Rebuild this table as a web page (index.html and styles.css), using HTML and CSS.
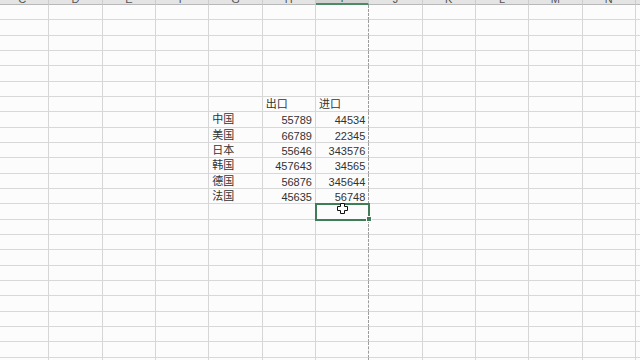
FILE: index.html
```html
<!DOCTYPE html>
<html lang="zh-CN">
<head>
<meta charset="utf-8">
<title>Sheet</title>
<link rel="stylesheet" href="styles.css">
</head>
<body>
<div class="sheet">
  <div class="hdr">
    <div class="h"><span>C</span></div><div class="h"><span>D</span></div><div class="h"><span>E</span></div><div class="h"><span>F</span></div><div class="h"><span>G</span></div><div class="h"><span>H</span></div><div class="h active"><span>I</span></div><div class="h"><span>J</span></div><div class="h"><span>K</span></div><div class="h"><span>L</span></div><div class="h"><span>M</span></div><div class="h"><span>N</span></div><div class="h"><span>O</span></div>
  </div>
  <div class="row"><div class="c"></div><div class="c"></div><div class="c"></div><div class="c"></div><div class="c"></div><div class="c"></div><div class="c"></div><div class="c"></div><div class="c"></div><div class="c"></div><div class="c"></div><div class="c"></div><div class="c"></div></div>
  <div class="row"><div class="c"></div><div class="c"></div><div class="c"></div><div class="c"></div><div class="c"></div><div class="c"></div><div class="c"></div><div class="c"></div><div class="c"></div><div class="c"></div><div class="c"></div><div class="c"></div><div class="c"></div></div>
  <div class="row"><div class="c"></div><div class="c"></div><div class="c"></div><div class="c"></div><div class="c"></div><div class="c"></div><div class="c"></div><div class="c"></div><div class="c"></div><div class="c"></div><div class="c"></div><div class="c"></div><div class="c"></div></div>
  <div class="row"><div class="c"></div><div class="c"></div><div class="c"></div><div class="c"></div><div class="c"></div><div class="c"></div><div class="c"></div><div class="c"></div><div class="c"></div><div class="c"></div><div class="c"></div><div class="c"></div><div class="c"></div></div>
  <div class="row"><div class="c"></div><div class="c"></div><div class="c"></div><div class="c"></div><div class="c"></div><div class="c"></div><div class="c"></div><div class="c"></div><div class="c"></div><div class="c"></div><div class="c"></div><div class="c"></div><div class="c"></div></div>
  <div class="row"><div class="c"></div><div class="c"></div><div class="c"></div><div class="c"></div><div class="c"></div><div class="c"></div><div class="c"></div><div class="c"></div><div class="c"></div><div class="c"></div><div class="c"></div><div class="c"></div><div class="c"></div></div>
  <div class="row"><div class="c"></div><div class="c"></div><div class="c"></div><div class="c"></div><div class="c"></div><div class="c t">出口</div><div class="c t">进口</div><div class="c"></div><div class="c"></div><div class="c"></div><div class="c"></div><div class="c"></div><div class="c"></div></div>
  <div class="row"><div class="c"></div><div class="c"></div><div class="c"></div><div class="c"></div><div class="c t">中国</div><div class="c n">55789</div><div class="c n">44534</div><div class="c"></div><div class="c"></div><div class="c"></div><div class="c"></div><div class="c"></div><div class="c"></div></div>
  <div class="row"><div class="c"></div><div class="c"></div><div class="c"></div><div class="c"></div><div class="c t">美国</div><div class="c n">66789</div><div class="c n">22345</div><div class="c"></div><div class="c"></div><div class="c"></div><div class="c"></div><div class="c"></div><div class="c"></div></div>
  <div class="row"><div class="c"></div><div class="c"></div><div class="c"></div><div class="c"></div><div class="c t">日本</div><div class="c n">55646</div><div class="c n">343576</div><div class="c"></div><div class="c"></div><div class="c"></div><div class="c"></div><div class="c"></div><div class="c"></div></div>
  <div class="row"><div class="c"></div><div class="c"></div><div class="c"></div><div class="c"></div><div class="c t">韩国</div><div class="c n">457643</div><div class="c n">34565</div><div class="c"></div><div class="c"></div><div class="c"></div><div class="c"></div><div class="c"></div><div class="c"></div></div>
  <div class="row"><div class="c"></div><div class="c"></div><div class="c"></div><div class="c"></div><div class="c t">德国</div><div class="c n">56876</div><div class="c n">345644</div><div class="c"></div><div class="c"></div><div class="c"></div><div class="c"></div><div class="c"></div><div class="c"></div></div>
  <div class="row"><div class="c"></div><div class="c"></div><div class="c"></div><div class="c"></div><div class="c t">法国</div><div class="c n">45635</div><div class="c n">56748</div><div class="c"></div><div class="c"></div><div class="c"></div><div class="c"></div><div class="c"></div><div class="c"></div></div>
  <div class="row"><div class="c"></div><div class="c"></div><div class="c"></div><div class="c"></div><div class="c"></div><div class="c"></div><div class="c sel"><svg class="cursor" width="11" height="11" viewBox="0 0 11 11"><polygon points="3.5,0.5 7.5,0.5 7.5,3.5 10.5,3.5 10.5,7.5 7.5,7.5 7.5,10.5 3.5,10.5 3.5,7.5 0.5,7.5 0.5,3.5 3.5,3.5" fill="#fff" stroke="#111" stroke-width="1"/></svg></div><div class="c"></div><div class="c"></div><div class="c"></div><div class="c"></div><div class="c"></div><div class="c"></div></div>
  <div class="row"><div class="c"></div><div class="c"></div><div class="c"></div><div class="c"></div><div class="c"></div><div class="c"></div><div class="c"></div><div class="c"></div><div class="c"></div><div class="c"></div><div class="c"></div><div class="c"></div><div class="c"></div></div>
  <div class="row"><div class="c"></div><div class="c"></div><div class="c"></div><div class="c"></div><div class="c"></div><div class="c"></div><div class="c"></div><div class="c"></div><div class="c"></div><div class="c"></div><div class="c"></div><div class="c"></div><div class="c"></div></div>
  <div class="row"><div class="c"></div><div class="c"></div><div class="c"></div><div class="c"></div><div class="c"></div><div class="c"></div><div class="c"></div><div class="c"></div><div class="c"></div><div class="c"></div><div class="c"></div><div class="c"></div><div class="c"></div></div>
  <div class="row"><div class="c"></div><div class="c"></div><div class="c"></div><div class="c"></div><div class="c"></div><div class="c"></div><div class="c"></div><div class="c"></div><div class="c"></div><div class="c"></div><div class="c"></div><div class="c"></div><div class="c"></div></div>
  <div class="row"><div class="c"></div><div class="c"></div><div class="c"></div><div class="c"></div><div class="c"></div><div class="c"></div><div class="c"></div><div class="c"></div><div class="c"></div><div class="c"></div><div class="c"></div><div class="c"></div><div class="c"></div></div>
  <div class="row"><div class="c"></div><div class="c"></div><div class="c"></div><div class="c"></div><div class="c"></div><div class="c"></div><div class="c"></div><div class="c"></div><div class="c"></div><div class="c"></div><div class="c"></div><div class="c"></div><div class="c"></div></div>
  <div class="row"><div class="c"></div><div class="c"></div><div class="c"></div><div class="c"></div><div class="c"></div><div class="c"></div><div class="c"></div><div class="c"></div><div class="c"></div><div class="c"></div><div class="c"></div><div class="c"></div><div class="c"></div></div>
  <div class="row"><div class="c"></div><div class="c"></div><div class="c"></div><div class="c"></div><div class="c"></div><div class="c"></div><div class="c"></div><div class="c"></div><div class="c"></div><div class="c"></div><div class="c"></div><div class="c"></div><div class="c"></div></div>
  <div class="row"><div class="c"></div><div class="c"></div><div class="c"></div><div class="c"></div><div class="c"></div><div class="c"></div><div class="c"></div><div class="c"></div><div class="c"></div><div class="c"></div><div class="c"></div><div class="c"></div><div class="c"></div></div>
  <div class="row"><div class="c"></div><div class="c"></div><div class="c"></div><div class="c"></div><div class="c"></div><div class="c"></div><div class="c"></div><div class="c"></div><div class="c"></div><div class="c"></div><div class="c"></div><div class="c"></div><div class="c"></div></div>
</div>
</body>
</html>
```

FILE: styles.css
```css
html, body {
  margin: 0;
  padding: 0;
  width: 640px;
  height: 360px;
  overflow: hidden;
  background: #fdfcfd;
}

.sheet {
  margin-left: -4px;
  width: 694px;
  font-family: "Liberation Sans", "Noto Sans CJK SC", sans-serif;
  font-size: 11px;
  color: #333;
}

.hdr {
  display: grid;
  grid-template-columns: repeat(13, 53.333px);
  height: 5px;
}

.h {
  box-sizing: border-box;
  height: 5px;
  background: #e4e4e4;
  border-right: 1px solid #cdcdcd;
  border-bottom: 1px solid #b8b8b8;
  overflow: hidden;
  display: flex;
  align-items: flex-end;
  justify-content: center;
  color: #555;
}

.h span {
  display: block;
  line-height: 11px;
  margin-bottom: -1px;
}

.h.active {
  background: #d2d2d2;
  border-bottom: 2px solid #4f8a68;
  color: #2f6b48;
}

.row {
  display: grid;
  grid-template-columns: repeat(13, 53.333px);
  height: 15.333px;
}

.c {
  box-sizing: border-box;
  height: 15.333px;
  border-right: 1px solid #d6d6d6;
  border-bottom: 1px solid #d8d8d8;
  line-height: 15px;
  white-space: nowrap;
  overflow: visible;
}

.row > .c:nth-child(7) {
  border-right: 1px dashed #9c9c9c;
}

.t {
  padding-left: 3px;
  text-align: left;
}

.n {
  padding: 1px 3px 0 0;
  line-height: 14px;
  text-align: right;
}

.sel {
  position: relative;
  z-index: 1;
  outline: 2px solid #3f7d58;
  outline-offset: -1px;
}

.sel::after {
  content: "";
  position: absolute;
  right: -4px;
  bottom: -3px;
  width: 4px;
  height: 4px;
  background: #3f7d58;
  border: 1px solid #fdfcfd;
}

.cursor {
  position: absolute;
  left: 21px;
  top: -1px;
  display: block;
}
```
